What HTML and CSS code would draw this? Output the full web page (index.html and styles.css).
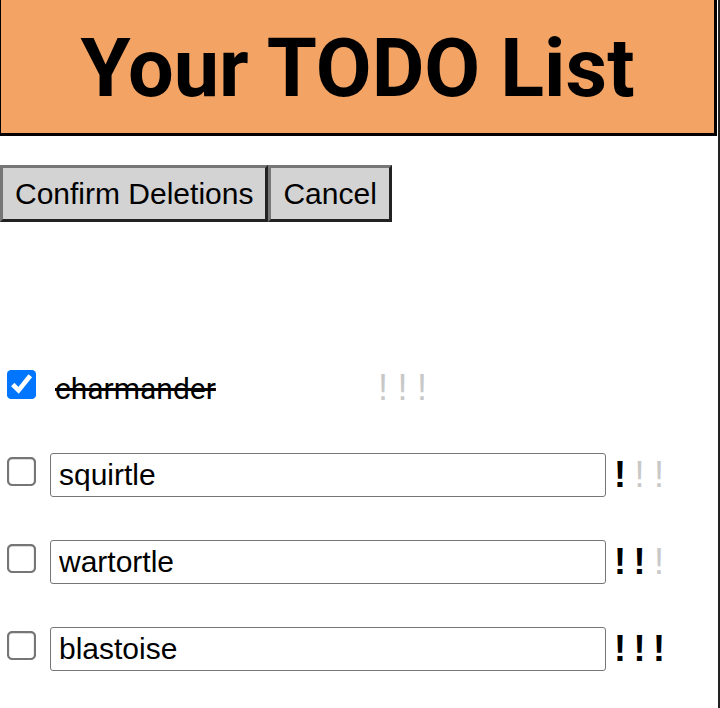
FILE: index.html
```html
<!DOCTYPE html>
<html>
<head>
<meta charset="utf-8">
<link rel="stylesheet" href="styles.css">
</head>
<body>
<div class="page">
  <header class="header">
    <h1 class="title">Your TODO List</h1>
  </header>
  <div class="actions">
    <button class="btn">Confirm Deletions</button>
    <button class="btn">Cancel</button>
  </div>
  <ul class="list">
    <li class="row">
      <input type="checkbox" class="check" checked>
      <span class="done">charmander</span>
      <span class="prio"><span class="off">!</span><span class="off">!</span><span class="off">!</span></span>
    </li>
    <li class="row">
      <input type="checkbox" class="check">
      <input type="text" class="task" value="squirtle">
      <span class="prio"><span class="on">!</span><span class="off">!</span><span class="off">!</span></span>
    </li>
    <li class="row">
      <input type="checkbox" class="check">
      <input type="text" class="task" value="wartortle">
      <span class="prio"><span class="on">!</span><span class="on">!</span><span class="off">!</span></span>
    </li>
    <li class="row">
      <input type="checkbox" class="check">
      <input type="text" class="task" value="blastoise">
      <span class="prio"><span class="on">!</span><span class="on">!</span><span class="on">!</span></span>
    </li>
  </ul>
</div>
</body>
</html>
```
FILE: styles.css
```css
html, body {
  margin: 0;
  padding: 0;
  background: #fff;
}
body {
  font-family: "Liberation Sans", Arial, sans-serif;
  color: #000;
}
.page {
  width: 718px;
  min-height: 708px;
  border-right: 2px solid #222;
  box-sizing: content-box;
}
.header {
  width: 713px;
  height: 133px;
  background: #f3a465;
  border-left: 1px solid #000;
  border-right: 3px solid #000;
  border-bottom: 3px solid #000;
  display: flex;
  align-items: center;
  justify-content: center;
}
.title {
  margin: 0;
  font-family: Roboto, "Liberation Sans", sans-serif;
  font-size: 81px;
  font-weight: bold;
  line-height: 1;
  padding-top: 3px;
}
.actions {
  display: flex;
  margin-top: 29px;
}
.btn {
  font-family: "Liberation Sans", Arial, sans-serif;
  font-size: 30px;
  height: 57px;
  padding: 0 12px;
  background: #d3d3d3;
  color: #000;
  border-style: solid;
  border-width: 3px;
  border-color: #767676 #222 #222 #767676;
  border-radius: 0;
  margin: 0;
}
.list {
  list-style: none;
  margin: 144px 0 0;
  padding: 0;
  display: flex;
  flex-direction: column;
  gap: 43px;
}
.row {
  display: flex;
  align-items: center;
  height: 44px;
}
.check {
  width: 13px;
  height: 13px;
  margin: 0 22px 0 15px;
  transform: translateY(-4px) scale(2.25);
}
.done {
  font-family: Roboto, "Liberation Sans", sans-serif;
  font-size: 30px;
  text-decoration: line-through;
  width: 314px;
  padding-left: 5px;
}
.task {
  width: 556px;
  height: 44px;
  box-sizing: border-box;
  font-family: "Liberation Sans", Arial, sans-serif;
  font-size: 30px;
  padding: 0 8px;
  border: 1px solid #767676;
  border-radius: 3px;
  margin: 0;
  color: #000;
}
.prio {
  display: flex;
  gap: 7.5px;
  margin-left: 8px;
  font-size: 36px;
  font-weight: bold;
  line-height: 1;
}
.prio span {
  width: 12px;
  text-align: center;
}
.on { color: #000; }
.off { color: #c8c8c8; font-weight: normal; }
```
